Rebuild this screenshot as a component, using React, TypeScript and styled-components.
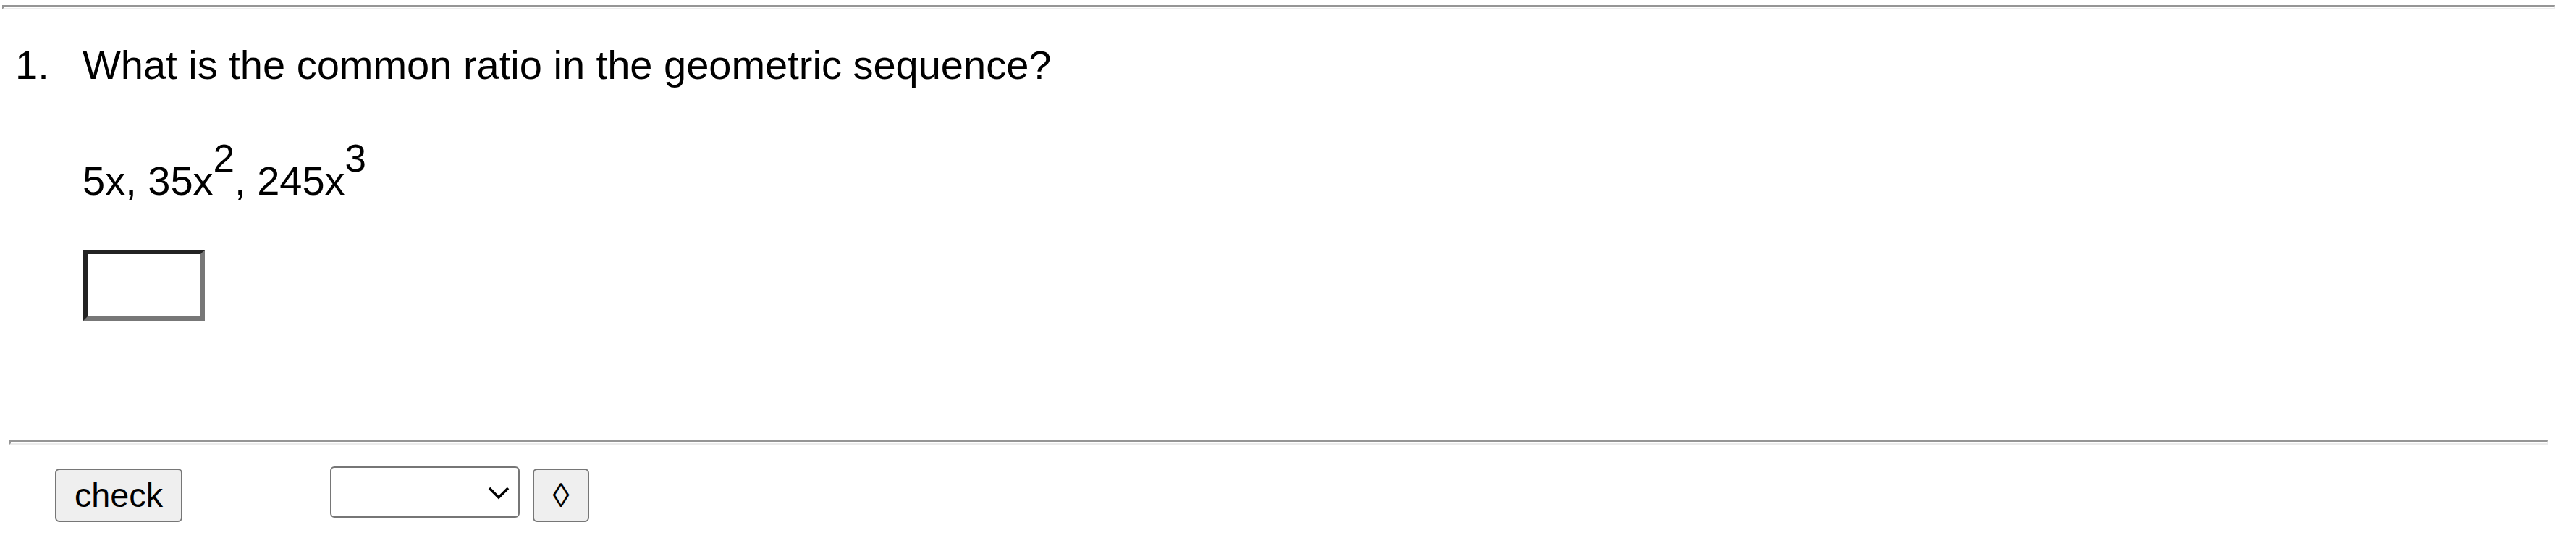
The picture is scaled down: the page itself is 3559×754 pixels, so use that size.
import React from 'react';
import styled, { createGlobalStyle } from 'styled-components';

const GlobalStyle = createGlobalStyle`
  html, body {
    margin: 0;
    padding: 0;
    background: #ffffff;
  }

  body {
    font-family: "Liberation Sans", Arial, Helvetica, sans-serif;
    color: #000000;
  }
`;

const Page = styled.div`
  width: 3559px;
  min-height: 754px;
  padding-top: 7px;
  box-sizing: border-box;
`;

// inset-looking rule, like a default <hr> blown up
const Rule = styled.div<{ $left: number; $right: number }>`
  margin: 0 ${p => p.$right}px 0 ${p => p.$left}px;
  height: 1px;
  border-style: solid;
  border-width: 3px 1px 2px 2px;
  border-color: #959595 #ececec #ececec #959595;
`;

const Problem = styled.div`
  display: flex;
  align-items: flex-start;
  margin-top: 45px;
  padding-left: 21px;
`;

const Number = styled.div`
  width: 93px;
  flex-shrink: 0;
  font-size: 56px;
  line-height: 64px;
`;

const Body = styled.div`
  display: flex;
  flex-direction: column;
  align-items: flex-start;
`;

const Prompt = styled.div`
  font-size: 56px;
  line-height: 64px;
`;

const Sequence = styled.div`
  margin-top: 96px;
  font-size: 56px;
  line-height: 64px;
  white-space: nowrap;
`;

const Sup = styled.sup`
  font-size: 53px;
  line-height: 0;
  vertical-align: 32px;
`;

const AnswerBox = styled.input`
  margin-top: 63px;
  margin-left: 1px;
  width: 168px;
  height: 98px;
  box-sizing: border-box;
  padding: 0 8px;
  border-style: solid;
  border-width: 6px;
  border-color: #222222 #777777 #777777 #222222;
  background: #ffffff;
  font-family: inherit;
  font-size: 46px;
  outline: none;
`;

const Controls = styled.div`
  display: flex;
  align-items: flex-start;
  margin-top: 30px;
  padding-left: 76px;
`;

const Button = styled.button<{ $width: number }>`
  margin-top: 3px;
  width: ${p => p.$width}px;
  height: 74px;
  box-sizing: border-box;
  padding: 0;
  border: 2px solid #767676;
  border-radius: 6px;
  background: #efefef;
  color: #000000;
  font-family: "Liberation Sans", Arial, sans-serif;
  font-size: 46.7px;
  line-height: 1;
  cursor: pointer;
`;

const SelectWrap = styled.div`
  position: relative;
  margin-left: 204px;
  margin-right: 18px;
  width: 262px;
  height: 71px;
`;

const Select = styled.select`
  appearance: none;
  -webkit-appearance: none;
  width: 100%;
  height: 100%;
  box-sizing: border-box;
  border: 2px solid #767676;
  border-radius: 6px;
  background: #ffffff;
  font-family: "Liberation Sans", Arial, sans-serif;
  font-size: 46.7px;
  padding: 0 60px 0 12px;
  outline: none;
`;

const Chevron = styled.svg`
  position: absolute;
  right: 14px;
  top: 28px;
  width: 30px;
  height: 18px;
  pointer-events: none;
`;

export default function App() {
  return (
    <Page>
      <GlobalStyle />
      <Rule $left={3} $right={29} />

      <Problem>
        <Number>1.</Number>
        <Body>
          <Prompt>What is the common ratio in the geometric sequence?</Prompt>
          <Sequence>
            5x, 35x<Sup>2</Sup>, 245x<Sup>3</Sup>
          </Sequence>
          <AnswerBox type="text" aria-label="answer" />
        </Body>
      </Problem>

      <div style={{ height: 165 }} />
      <Rule $left={13} $right={39} />

      <Controls>
        <Button $width={176}>check</Button>
        <SelectWrap>
          <Select defaultValue="">
            <option value=""></option>
          </Select>
          <Chevron viewBox="0 0 30 18">
            <polyline
              points="2,2 15,15 28,2"
              fill="none"
              stroke="#000"
              strokeWidth="3.6"
            />
          </Chevron>
        </SelectWrap>
        <Button $width={78}>◊</Button>
      </Controls>
    </Page>
  );
}
